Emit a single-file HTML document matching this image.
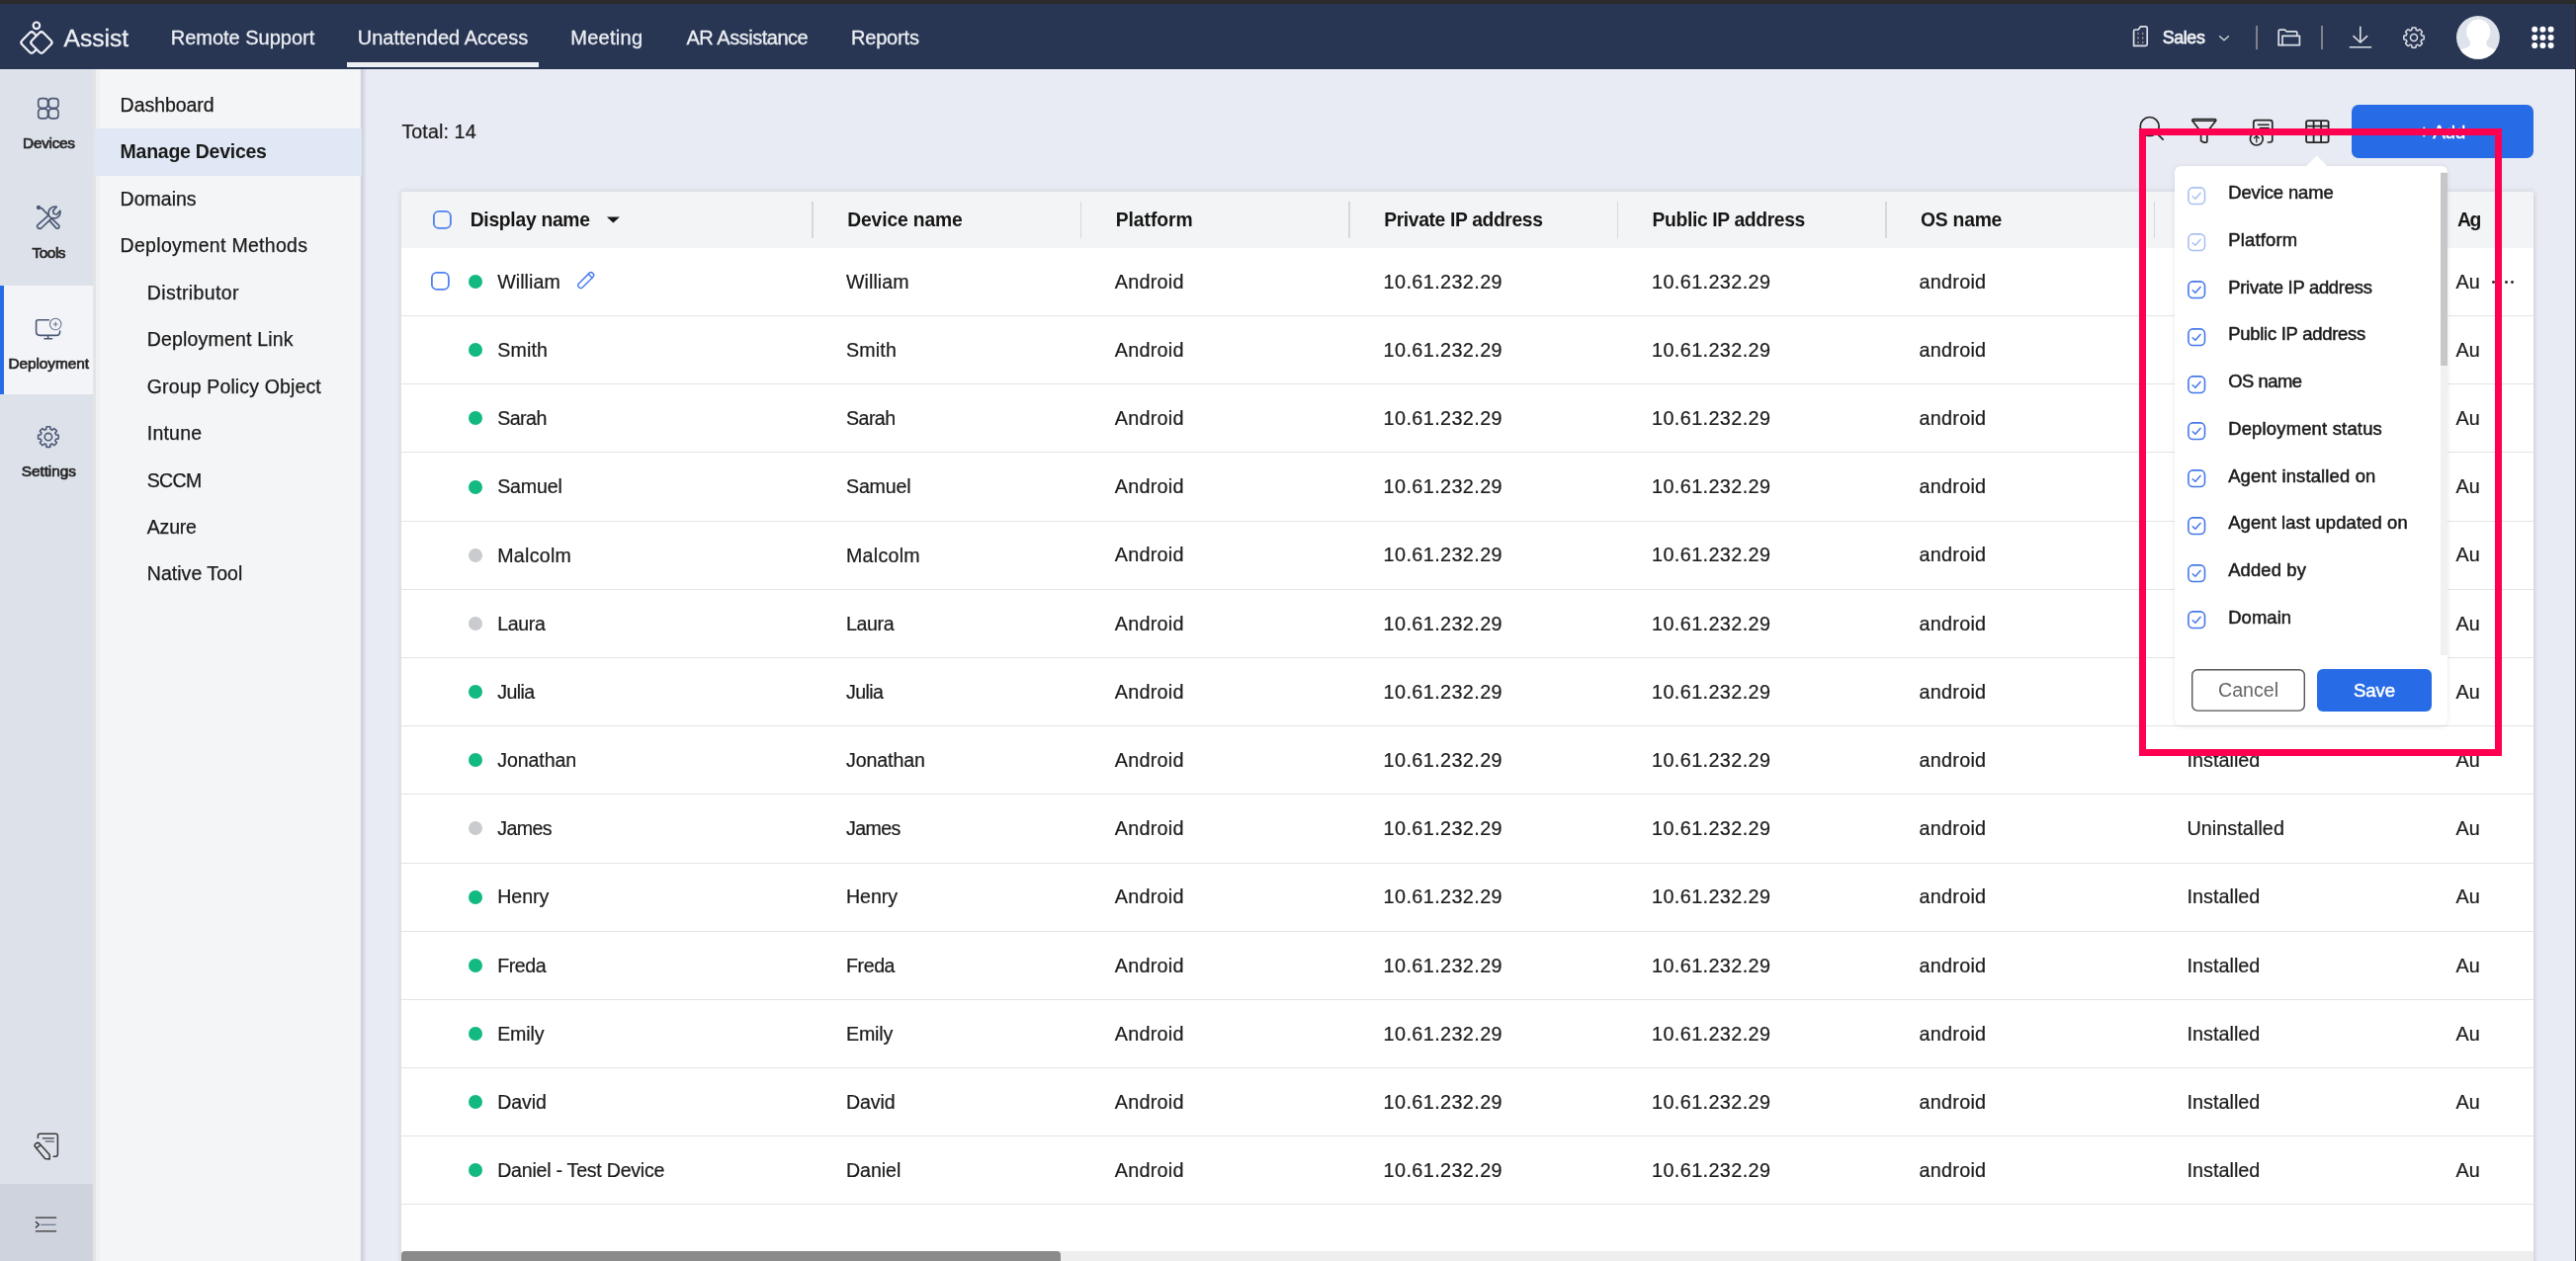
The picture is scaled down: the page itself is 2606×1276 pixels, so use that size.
<!DOCTYPE html>
<html><head><meta charset="utf-8"><title>Assist</title>
<style>
html,body{margin:0;padding:0;}
body{width:2606px;height:1276px;overflow:hidden;background:#2b2b2b;font-family:"Liberation Sans", sans-serif;position:relative;}
.t{position:absolute;white-space:nowrap;line-height:1;}
.b{position:absolute;box-sizing:border-box;}
svg{position:absolute;overflow:visible;}
#app{will-change:transform;position:absolute;left:0;top:0;width:2606px;height:1276px;overflow:hidden;}
</style></head><body><div id="app">
<div class="b" style="left:0.00px;top:4.40px;width:2604.50px;height:1271.60px;background:#e8ebf3;"></div>
<div class="b" style="left:0.00px;top:4.40px;width:2604.50px;height:65.80px;background:#283654;"></div>
<svg style="left:18px;top:16px" width="40" height="44" viewBox="0 0 40 44" fill="none" stroke="#eff0f4" stroke-width="2.2" stroke-linejoin="round">
<circle cx="18.9" cy="9.8" r="3.3"/>
<rect x="-8.3" y="-8.3" width="16.6" height="16.6" rx="2.9" transform="translate(14.0 27.0) rotate(45)"/>
<rect x="-8.3" y="-8.3" width="16.6" height="16.6" rx="2.9" transform="translate(23.9 27.0) rotate(45)" fill="#283654"/>
</svg>
<div class="t" style="left:64.60px;top:27.20px;font-size:24.6px;font-weight:400;color:#eceef2;letter-spacing:-0.032px;-webkit-text-stroke:0.35px #eceef2;">Assist</div>
<div class="t" style="left:172.70px;top:27.60px;font-size:20px;font-weight:400;color:#eceef2;letter-spacing:-0.003px;-webkit-text-stroke:0.3px #eceef2;">Remote Support</div>
<div class="t" style="left:361.80px;top:27.60px;font-size:20px;font-weight:400;color:#eceef2;letter-spacing:0.003px;-webkit-text-stroke:0.3px #eceef2;">Unattended Access</div>
<div class="t" style="left:577.30px;top:27.60px;font-size:20px;font-weight:400;color:#eceef2;letter-spacing:0.263px;-webkit-text-stroke:0.3px #eceef2;">Meeting</div>
<div class="t" style="left:694.50px;top:27.60px;font-size:20px;font-weight:400;color:#eceef2;letter-spacing:-0.481px;-webkit-text-stroke:0.3px #eceef2;">AR Assistance</div>
<div class="t" style="left:861.00px;top:27.60px;font-size:20px;font-weight:400;color:#eceef2;letter-spacing:-0.190px;-webkit-text-stroke:0.3px #eceef2;">Reports</div>
<div class="b" style="left:350.50px;top:63.00px;width:194.10px;height:4.50px;background:#eceef3;"></div>
<svg style="left:2155px;top:23px" width="22" height="26" viewBox="0 0 22 26" fill="none" stroke="#dcdfe6" stroke-width="1.7" stroke-linejoin="round" stroke-linecap="round">
<path d="M3.6 23.4 L3.6 8.4 Q3.6 7 5 7 L8.2 7 L10.6 3.8 L15.6 3.8 Q17.2 3.8 17.2 5.4 L17.2 21.8 Q17.2 23.4 15.6 23.4 Z"/>
<path d="M8 10.4v0.9 M12.7 10.4v0.9 M8 15v0.9 M12.7 15v0.9 M8 19.4v0.9 M12.7 19.4v0.9" stroke="#9d9786" stroke-width="1.5"/>
</svg>
<div class="t" style="left:2187.80px;top:29.90px;font-size:17.8px;font-weight:400;color:#eceef2;letter-spacing:-0.377px;-webkit-text-stroke:0.75px #eceef2;">Sales</div>
<svg style="left:2243px;top:34px" width="14" height="10" viewBox="0 0 14 10" fill="none" stroke="#c9cdd6" stroke-width="1.5" stroke-linecap="round" stroke-linejoin="round"><path d="M2.6 2.8 L7 6.8 L11.4 2.8"/></svg>
<div class="b" style="left:2282.40px;top:25.50px;width:1.30px;height:24.50px;background:#7d818b;"></div>
<svg style="left:2303px;top:28px" width="26" height="20" viewBox="0 0 26 20" fill="none" stroke="#dcdfe6" stroke-width="1.7" stroke-linejoin="round" stroke-linecap="round">
<path d="M2.2 17.6 L2.2 3.4 Q2.2 2.2 3.4 2.2 L8.6 2.2 L10 3.8 L19.6 3.8 Q20.8 3.8 20.8 5 L20.8 7.6"/>
<path d="M6 8.4 L6 17.6 L23.4 17.6 L23.4 8.4 Z"/>
<path d="M2.2 17.6 L6 17.6"/>
</svg>
<div class="b" style="left:2348.40px;top:25.50px;width:1.30px;height:24.50px;background:#7d818b;"></div>
<svg style="left:2375px;top:26px" width="26" height="24" viewBox="0 0 26 24" fill="none" stroke="#dcdfe6" stroke-width="1.6" stroke-linejoin="round" stroke-linecap="round">
<path d="M12.8 1.2 L12.8 16.4 M6 10.6 L12.8 17 L19.6 10.6 M2.4 21.8 L23.6 21.8"/>
</svg>
<svg style="left:2428px;top:24px" width="28" height="28" viewBox="0 0 28 28" fill="none" stroke="#dcdfe6" stroke-width="1.5" stroke-linejoin="round">
<path d="M12.47 3.91 L15.53 3.91 Q16.21 3.83 16.14 6.29 L18.01 7.06 Q19.70 5.27 20.12 5.81 L22.29 7.98 Q22.83 8.40 21.04 10.09 L21.81 11.96 Q24.27 11.89 24.19 12.57 L24.19 15.63 Q24.27 16.31 21.81 16.24 L21.04 18.11 Q22.83 19.80 22.29 20.22 L20.12 22.39 Q19.70 22.93 18.01 21.14 L16.14 21.91 Q16.21 24.37 15.53 24.29 L12.47 24.29 Q11.79 24.37 11.86 21.91 L9.99 21.14 Q8.30 22.93 7.88 22.39 L5.71 20.22 Q5.17 19.80 6.96 18.11 L6.19 16.24 Q3.73 16.31 3.81 15.63 L3.81 12.57 Q3.73 11.89 6.19 11.96 L6.96 10.09 Q5.17 8.40 5.71 7.98 L7.88 5.81 Q8.30 5.27 9.99 7.06 L11.86 6.29 Q11.79 3.83 12.47 3.91 Z"/><circle cx="14" cy="14.1" r="3.5"/></svg>
<svg style="left:2485.3px;top:16.1px" width="44" height="44" viewBox="0 0 44 44">
<defs><clipPath id="avc"><circle cx="21.9" cy="21.9" r="21.9"/></clipPath></defs>
<circle cx="21.9" cy="21.9" r="21.9" fill="#dde2eb"/>
<g clip-path="url(#avc)" fill="#ffffff">
<ellipse cx="22.2" cy="16.2" rx="12.1" ry="12.6"/>
<path d="M13.6 24 L30.8 24 L30.4 29.6 Q31.2 31.6 35 32.8 Q40 34.2 44 36.4 L44 46 L0 46 L0 36.4 Q4 34.2 9 32.8 Q13 31.6 14 29.6 Z"/>
</g></svg>
<svg style="left:0;top:0" width="2606" height="80" fill="#ffffff"><circle cx="2564.2" cy="29.7" r="3"/><circle cx="2572.4" cy="29.7" r="3"/><circle cx="2580.6" cy="29.7" r="3"/><circle cx="2564.2" cy="37.9" r="3"/><circle cx="2572.4" cy="37.9" r="3"/><circle cx="2580.6" cy="37.9" r="3"/><circle cx="2564.2" cy="46.0" r="3"/><circle cx="2572.4" cy="46.0" r="3"/><circle cx="2580.6" cy="46.0" r="3"/></svg>
<div class="b" style="left:0.00px;top:70.20px;width:94.60px;height:1205.80px;background:#dde1ea;"></div>
<div class="b" style="left:0.00px;top:1197.80px;width:94.80px;height:78.20px;background:#cfd3dd;"></div>
<div class="b" style="left:0.00px;top:288.60px;width:94.80px;height:110.10px;background:#f3f4f7;"></div>
<div class="b" style="left:0.00px;top:288.60px;width:4.00px;height:110.10px;background:#276ce6;"></div>
<svg style="left:36px;top:97px" width="26" height="26" viewBox="0 0 26 26" fill="none" stroke="#4b5875" stroke-width="1.6">
<rect x="2.7" y="2.6" width="9.7" height="9.7" rx="3.2"/><rect x="13.3" y="2.6" width="9.7" height="9.7" rx="3.2"/>
<rect x="2.7" y="13.2" width="9.7" height="9.7" rx="3.2"/><rect x="13.3" y="13.2" width="9.7" height="9.7" rx="3.2"/></svg>
<div class="t" style="left:23.10px;top:136.80px;font-size:15.4px;font-weight:400;color:#262626;letter-spacing:-0.307px;-webkit-text-stroke:0.7px #262626;">Devices</div>
<svg style="left:35px;top:206px" width="28" height="28" viewBox="0 0 28 28" fill="none" stroke="#4b5875" stroke-width="1.7" stroke-linecap="round" stroke-linejoin="round">
<path d="M3.2 24.4 Q1.8 22.8 3.4 21.4 L14.4 11.6 Q13.2 7.2 16.4 4.6 Q19 2.6 22.2 3.4 L18.6 7.4 L19.4 10.2 L22.4 11 L25.8 7.2 Q26.6 10.6 24.2 13.2 Q21.4 15.8 17.6 14.6 L6.6 25 Q4.8 26.2 3.2 24.4 Z"/>
<path d="M4.4 4.2 L7.4 4.8 L17 15 M15.2 17.4 L21.6 24.6 Q23 25.8 24.4 24.6 Q25.6 23.2 24.4 21.8 L17.6 15.4 M4.4 4.2 L3.4 3.4"/>
<circle cx="4" cy="4" r="1.3"/>
</svg>
<div class="t" style="left:32.50px;top:248.10px;font-size:15.4px;font-weight:400;color:#262626;letter-spacing:-0.467px;-webkit-text-stroke:0.7px #262626;">Tools</div>
<svg style="left:33px;top:318px" width="32" height="28" viewBox="0 0 32 28" fill="none" stroke="#4b5875" stroke-width="1.6" stroke-linecap="round" stroke-linejoin="round">
<path d="M16.4 5.8 L5.6 5.8 Q3.6 5.8 3.6 7.8 L3.6 17.6 Q3.6 21.4 7.4 21.4 L24 21.4 Q27.6 21.4 27.6 17.8 L27.6 17"/>
<path d="M15.6 21.6 L15.6 24.4 M12 24.8 L19.6 24.8"/>
<circle cx="23.2" cy="10" r="5.7" stroke-width="1.1" stroke="#69748f"/>
<path d="M23.2 8 L23.2 12 M21.2 10 L25.2 10" stroke-width="1.1" stroke="#69748f"/>
</svg>
<div class="t" style="left:8.40px;top:359.50px;font-size:15.4px;font-weight:400;color:#262626;letter-spacing:-0.053px;-webkit-text-stroke:0.7px #262626;">Deployment</div>
<svg style="left:35px;top:428px" width="28" height="28" viewBox="0 0 28 28" fill="none" stroke="#4b5875" stroke-width="1.6" stroke-linejoin="round">
<path d="M12.35 3.82 L15.45 3.82 Q16.13 3.73 16.01 6.38 L17.86 7.15 Q19.65 5.19 20.08 5.73 L22.27 7.92 Q22.81 8.35 20.85 10.14 L21.62 11.99 Q24.27 11.87 24.18 12.55 L24.18 15.65 Q24.27 16.33 21.62 16.21 L20.85 18.06 Q22.81 19.85 22.27 20.28 L20.08 22.47 Q19.65 23.01 17.86 21.05 L16.01 21.82 Q16.13 24.47 15.45 24.38 L12.35 24.38 Q11.67 24.47 11.79 21.82 L9.94 21.05 Q8.15 23.01 7.72 22.47 L5.53 20.28 Q4.99 19.85 6.95 18.06 L6.18 16.21 Q3.53 16.33 3.62 15.65 L3.62 12.55 Q3.53 11.87 6.18 11.99 L6.95 10.14 Q4.99 8.35 5.53 7.92 L7.72 5.73 Q8.15 5.19 9.94 7.15 L11.79 6.38 Q11.67 3.73 12.35 3.82 Z"/><circle cx="13.9" cy="14.1" r="3.7"/></svg>
<div class="t" style="left:21.70px;top:469.30px;font-size:15.4px;font-weight:400;color:#262626;letter-spacing:-0.053px;-webkit-text-stroke:0.7px #262626;">Settings</div>
<svg style="left:32px;top:1143px" width="30" height="34" viewBox="0 0 30 34" fill="none" stroke="#3a3a3a" stroke-width="1.5" stroke-linecap="round" stroke-linejoin="round">
<path d="M6.4 8.6 L6.4 6.4 Q6.4 4.2 8.6 4.2 L24.2 4.2 Q26.4 4.2 26.4 6.4 L26.4 25 Q26.4 27.2 24.2 27.2 L22.2 27.2"/>
<path d="M11.2 8.8 L22.4 8.8 M14.2 12 L22.4 12" stroke-width="1.2"/>
<path d="M3.6 17.6 Q2.2 15.6 4.4 14 Q6.6 12.6 8.2 14.4 L18.2 25.6 L18.2 30 L13.6 29.4 Z M4.4 18.4 Q7.4 18.2 8.8 15.2" fill="#dde1ea"/>
</svg>
<svg style="left:34px;top:1229px" width="26" height="22" viewBox="0 0 26 22" fill="none" stroke="#333" stroke-width="1.3" stroke-linecap="round" stroke-linejoin="round">
<path d="M2.4 3.2 L22.6 3.2 M2.4 16.9 L22.6 16.9"/><path d="M7.6 10.3 L22 10.3" stroke="#55617c" stroke-width="1.1"/><path d="M2.4 7.6 L5.4 10.3 L2.4 13" stroke-width="1.4"/>
</svg>
<div class="b" style="left:94.80px;top:70.20px;width:271.40px;height:1205.80px;background:#f4f5f7;"></div>
<div class="b" style="left:94.20px;top:70.20px;width:2.70px;height:1205.80px;background:#e3e4e5;"></div>
<div class="b" style="left:96.90px;top:70.20px;width:4.00px;height:1205.80px;background:#f0f0f1;"></div>
<div class="b" style="left:364.20px;top:70.20px;width:2.00px;height:1205.80px;background:linear-gradient(90deg,rgba(150,155,170,0),rgba(150,155,170,0.45));"></div>
<div class="b" style="left:366.20px;top:70.20px;width:4.50px;height:1205.80px;background:linear-gradient(90deg,rgba(150,155,175,0.34),rgba(150,155,175,0));"></div>
<div class="b" style="left:96.00px;top:130.20px;width:270.00px;height:47.40px;background:#dfe8f4;"></div>
<div class="t" style="left:121.60px;top:96.95px;font-size:19.5px;font-weight:400;color:#1a1a1a;letter-spacing:-0.045px;-webkit-text-stroke:0.25px #1a1a1a;">Dashboard</div>
<div class="t" style="left:121.60px;top:144.40px;font-size:19.5px;font-weight:700;color:#1a1a1a;letter-spacing:-0.261px;">Manage Devices</div>
<div class="t" style="left:121.60px;top:191.85px;font-size:19.5px;font-weight:400;color:#1a1a1a;letter-spacing:0.007px;-webkit-text-stroke:0.25px #1a1a1a;">Domains</div>
<div class="t" style="left:121.60px;top:239.30px;font-size:19.5px;font-weight:400;color:#1a1a1a;letter-spacing:0.302px;-webkit-text-stroke:0.25px #1a1a1a;">Deployment Methods</div>
<div class="t" style="left:148.80px;top:286.75px;font-size:19.5px;font-weight:400;color:#1a1a1a;letter-spacing:0.395px;-webkit-text-stroke:0.25px #1a1a1a;">Distributor</div>
<div class="t" style="left:148.80px;top:334.20px;font-size:19.5px;font-weight:400;color:#1a1a1a;letter-spacing:0.170px;-webkit-text-stroke:0.25px #1a1a1a;">Deployment Link</div>
<div class="t" style="left:148.80px;top:381.65px;font-size:19.5px;font-weight:400;color:#1a1a1a;letter-spacing:0.142px;-webkit-text-stroke:0.25px #1a1a1a;">Group Policy Object</div>
<div class="t" style="left:148.80px;top:429.10px;font-size:19.5px;font-weight:400;color:#1a1a1a;letter-spacing:0.214px;-webkit-text-stroke:0.25px #1a1a1a;">Intune</div>
<div class="t" style="left:148.80px;top:476.55px;font-size:19.5px;font-weight:400;color:#1a1a1a;letter-spacing:-0.680px;-webkit-text-stroke:0.25px #1a1a1a;">SCCM</div>
<div class="t" style="left:148.80px;top:524.00px;font-size:19.5px;font-weight:400;color:#1a1a1a;letter-spacing:-0.211px;-webkit-text-stroke:0.25px #1a1a1a;">Azure</div>
<div class="t" style="left:148.80px;top:571.45px;font-size:19.5px;font-weight:400;color:#1a1a1a;letter-spacing:0.034px;-webkit-text-stroke:0.25px #1a1a1a;">Native Tool</div>
<div class="t" style="left:406.40px;top:123.55px;font-size:19.7px;font-weight:400;color:#1c1c1c;letter-spacing:0.096px;-webkit-text-stroke:0.22px #1c1c1c;">Total: 14</div>
<svg style="left:2160px;top:112px" width="34" height="34" viewBox="0 0 34 34" fill="none" stroke="#262626" stroke-width="1.7" stroke-linecap="round">
<circle cx="14.7" cy="16" r="9.5"/><path d="M21.8 22.8 L28.2 29.2"/></svg>
<svg style="left:2213px;top:116px" width="34" height="32" viewBox="0 0 34 32" fill="none" stroke="#262626" stroke-width="1.7" stroke-linejoin="round" stroke-linecap="round">
<path d="M6.2 4.6 L27.4 4.6 Q29.4 4.6 28.4 6.6 L19.8 17.6 L19.8 27 Q19.8 28.2 18.6 28.2 L16.6 28.2 L13.6 26.4 L13.6 17.6 L5.2 6.6 Q4.2 4.6 6.2 4.6 Z"/>
<path d="M5 6.4 L28.6 6.4" stroke-width="1.3"/></svg>
<svg style="left:2272px;top:117.2px" width="32" height="32" viewBox="0 0 32 32" fill="none" stroke="#262626" stroke-width="1.7" stroke-linejoin="round" stroke-linecap="round">
<path d="M7.8 14 L7.8 7 Q7.8 4.6 10.2 4.6 L24.4 4.6 Q26.8 4.6 26.8 7 L26.8 24.6 Q26.8 27 24.4 27 L22.4 27"/>
<path d="M12.4 9.2 L23.2 9.2 M14.4 12.4 L23.2 12.4" stroke-width="1.4"/>
<circle cx="10.8" cy="23.6" r="6.4"/><path d="M10.8 26.8 L10.8 20.8 M8.4 22.8 L10.8 20.4 L13.2 22.8" stroke-width="1.3"/></svg>
<svg style="left:2330px;top:119px" width="30" height="28" viewBox="0 0 30 28" fill="none" stroke="#262626" stroke-width="1.8" stroke-linejoin="round">
<rect x="3.1" y="3.1" width="22.5" height="22" rx="1.8"/><path d="M3.1 8.6 L25.6 8.6 M3.1 17.4 L25.6 17.4 M10.6 3.1 L10.6 25.1 M18.1 3.1 L18.1 25.1"/></svg>
<div class="b" style="left:2379.40px;top:105.80px;width:183.60px;height:54.30px;background:#276ce6;border-radius:7px;"></div>
<div class="t" style="left:2446.80px;top:124.30px;font-size:19px;font-weight:400;color:#ffffff;letter-spacing:-0.428px;-webkit-text-stroke:0.4px #ffffff;">+ Add</div>
<div class="b" style="left:406.20px;top:194.00px;width:2156.80px;height:1106.00px;border-radius:4px;box-shadow:0 0 3px 2.5px rgba(150,150,150,0.11);"></div>
<div class="b" style="left:406.20px;top:194.00px;width:2156.80px;height:1082.00px;background:#ffffff;border-radius:4px 4px 0 0;"></div>
<div class="b" style="left:406.20px;top:194.00px;width:2156.80px;height:56.60px;background:#f3f4f6;border-radius:4px 4px 0 0;"></div>
<div class="b" style="left:821.30px;top:203.90px;width:1.40px;height:37.00px;background:#d6d8dc;"></div>
<div class="b" style="left:1092.80px;top:203.90px;width:1.40px;height:37.00px;background:#d6d8dc;"></div>
<div class="b" style="left:1364.30px;top:203.90px;width:1.40px;height:37.00px;background:#d6d8dc;"></div>
<div class="b" style="left:1635.70px;top:203.90px;width:1.40px;height:37.00px;background:#d6d8dc;"></div>
<div class="b" style="left:1907.20px;top:203.90px;width:1.40px;height:37.00px;background:#d6d8dc;"></div>
<div class="b" style="left:2178.60px;top:203.90px;width:1.40px;height:37.00px;background:#d6d8dc;"></div>
<div class="b" style="left:2450.00px;top:203.90px;width:1.40px;height:37.00px;background:#d6d8dc;"></div>
<svg style="left:436.6px;top:212px" width="21" height="21" viewBox="0 0 21 21"><rect x="1.9" y="1.9" width="17" height="17" rx="5" fill="none" stroke="#4f80ee" stroke-width="1.8"/></svg>
<div class="t" style="left:475.70px;top:213.25px;font-size:19.3px;font-weight:700;color:#161616;letter-spacing:-0.276px;">Display name</div>
<svg style="left:613px;top:217px" width="16" height="12" viewBox="0 0 16 12"><path d="M0.9 2.6 L13.9 2.6 L7.4 8.6 Z" fill="#161616"/></svg>
<div class="t" style="left:857.20px;top:213.25px;font-size:19.3px;font-weight:700;color:#161616;letter-spacing:-0.128px;">Device name</div>
<div class="t" style="left:1128.70px;top:213.25px;font-size:19.3px;font-weight:700;color:#161616;letter-spacing:-0.040px;">Platform</div>
<div class="t" style="left:1400.20px;top:213.25px;font-size:19.3px;font-weight:700;color:#161616;letter-spacing:-0.359px;">Private IP address</div>
<div class="t" style="left:1671.60px;top:213.25px;font-size:19.3px;font-weight:700;color:#161616;letter-spacing:-0.358px;">Public IP address</div>
<div class="t" style="left:1943.10px;top:213.25px;font-size:19.3px;font-weight:700;color:#161616;letter-spacing:-0.228px;">OS name</div>
<div class="t" style="left:2214.50px;top:213.25px;font-size:19.3px;font-weight:700;color:#161616;letter-spacing:-0.441px;">Deployment status</div>
<div class="t" style="left:2485.90px;top:213.25px;font-size:19.3px;font-weight:700;color:#161616;letter-spacing:-1.202px;">Ag</div>
<div class="b" style="left:406.20px;top:319.00px;width:2156.80px;height:1.00px;background:#e3e4e6;"></div>
<div class="b" style="left:474.00px;top:278.00px;width:14.00px;height:14.00px;background:#12b981;border-radius:50%;"></div>
<div class="t" style="left:503.20px;top:275.80px;font-size:19.6px;font-weight:400;color:#1c1c1c;letter-spacing:0.068px;-webkit-text-stroke:0.22px #1c1c1c;">William</div>
<div class="t" style="left:856.00px;top:275.80px;font-size:19.6px;font-weight:400;color:#1c1c1c;letter-spacing:0.068px;-webkit-text-stroke:0.22px #1c1c1c;">William</div>
<div class="t" style="left:1127.70px;top:275.70px;font-size:19.8px;font-weight:400;color:#1c1c1c;letter-spacing:0.259px;-webkit-text-stroke:0.22px #1c1c1c;">Android</div>
<div class="t" style="left:1399.60px;top:275.70px;font-size:19.8px;font-weight:400;color:#1c1c1c;letter-spacing:0.407px;-webkit-text-stroke:0.22px #1c1c1c;">10.61.232.29</div>
<div class="t" style="left:1671.00px;top:275.70px;font-size:19.8px;font-weight:400;color:#1c1c1c;letter-spacing:0.407px;-webkit-text-stroke:0.22px #1c1c1c;">10.61.232.29</div>
<div class="t" style="left:1941.40px;top:275.70px;font-size:19.8px;font-weight:400;color:#1c1c1c;letter-spacing:0.286px;-webkit-text-stroke:0.22px #1c1c1c;">android</div>
<div class="t" style="left:2212.40px;top:275.70px;font-size:19.8px;font-weight:400;color:#1c1c1c;letter-spacing:0.035px;-webkit-text-stroke:0.22px #1c1c1c;">Installed</div>
<div class="t" style="left:2484.60px;top:275.70px;font-size:19.8px;font-weight:400;color:#1c1c1c;letter-spacing:-0.102px;-webkit-text-stroke:0.22px #1c1c1c;">Au</div>
<div class="b" style="left:406.20px;top:388.00px;width:2156.80px;height:1.00px;background:#e3e4e6;"></div>
<div class="b" style="left:474.00px;top:347.18px;width:14.00px;height:14.00px;background:#12b981;border-radius:50%;"></div>
<div class="t" style="left:503.20px;top:344.98px;font-size:19.6px;font-weight:400;color:#1c1c1c;letter-spacing:0.181px;-webkit-text-stroke:0.22px #1c1c1c;">Smith</div>
<div class="t" style="left:856.00px;top:344.98px;font-size:19.6px;font-weight:400;color:#1c1c1c;letter-spacing:0.181px;-webkit-text-stroke:0.22px #1c1c1c;">Smith</div>
<div class="t" style="left:1127.70px;top:344.88px;font-size:19.8px;font-weight:400;color:#1c1c1c;letter-spacing:0.259px;-webkit-text-stroke:0.22px #1c1c1c;">Android</div>
<div class="t" style="left:1399.60px;top:344.88px;font-size:19.8px;font-weight:400;color:#1c1c1c;letter-spacing:0.407px;-webkit-text-stroke:0.22px #1c1c1c;">10.61.232.29</div>
<div class="t" style="left:1671.00px;top:344.88px;font-size:19.8px;font-weight:400;color:#1c1c1c;letter-spacing:0.407px;-webkit-text-stroke:0.22px #1c1c1c;">10.61.232.29</div>
<div class="t" style="left:1941.40px;top:344.88px;font-size:19.8px;font-weight:400;color:#1c1c1c;letter-spacing:0.286px;-webkit-text-stroke:0.22px #1c1c1c;">android</div>
<div class="t" style="left:2212.40px;top:344.88px;font-size:19.8px;font-weight:400;color:#1c1c1c;letter-spacing:0.035px;-webkit-text-stroke:0.22px #1c1c1c;">Installed</div>
<div class="t" style="left:2484.60px;top:344.88px;font-size:19.8px;font-weight:400;color:#1c1c1c;letter-spacing:-0.102px;-webkit-text-stroke:0.22px #1c1c1c;">Au</div>
<div class="b" style="left:406.20px;top:457.00px;width:2156.80px;height:1.00px;background:#e3e4e6;"></div>
<div class="b" style="left:474.00px;top:416.36px;width:14.00px;height:14.00px;background:#12b981;border-radius:50%;"></div>
<div class="t" style="left:503.20px;top:414.16px;font-size:19.6px;font-weight:400;color:#1c1c1c;letter-spacing:-0.539px;-webkit-text-stroke:0.22px #1c1c1c;">Sarah</div>
<div class="t" style="left:856.00px;top:414.16px;font-size:19.6px;font-weight:400;color:#1c1c1c;letter-spacing:-0.539px;-webkit-text-stroke:0.22px #1c1c1c;">Sarah</div>
<div class="t" style="left:1127.70px;top:414.06px;font-size:19.8px;font-weight:400;color:#1c1c1c;letter-spacing:0.259px;-webkit-text-stroke:0.22px #1c1c1c;">Android</div>
<div class="t" style="left:1399.60px;top:414.06px;font-size:19.8px;font-weight:400;color:#1c1c1c;letter-spacing:0.407px;-webkit-text-stroke:0.22px #1c1c1c;">10.61.232.29</div>
<div class="t" style="left:1671.00px;top:414.06px;font-size:19.8px;font-weight:400;color:#1c1c1c;letter-spacing:0.407px;-webkit-text-stroke:0.22px #1c1c1c;">10.61.232.29</div>
<div class="t" style="left:1941.40px;top:414.06px;font-size:19.8px;font-weight:400;color:#1c1c1c;letter-spacing:0.286px;-webkit-text-stroke:0.22px #1c1c1c;">android</div>
<div class="t" style="left:2212.40px;top:414.06px;font-size:19.8px;font-weight:400;color:#1c1c1c;letter-spacing:0.035px;-webkit-text-stroke:0.22px #1c1c1c;">Installed</div>
<div class="t" style="left:2484.60px;top:414.06px;font-size:19.8px;font-weight:400;color:#1c1c1c;letter-spacing:-0.102px;-webkit-text-stroke:0.22px #1c1c1c;">Au</div>
<div class="b" style="left:406.20px;top:527.00px;width:2156.80px;height:1.00px;background:#e3e4e6;"></div>
<div class="b" style="left:474.00px;top:485.54px;width:14.00px;height:14.00px;background:#12b981;border-radius:50%;"></div>
<div class="t" style="left:503.20px;top:483.34px;font-size:19.6px;font-weight:400;color:#1c1c1c;letter-spacing:-0.173px;-webkit-text-stroke:0.22px #1c1c1c;">Samuel</div>
<div class="t" style="left:856.00px;top:483.34px;font-size:19.6px;font-weight:400;color:#1c1c1c;letter-spacing:-0.173px;-webkit-text-stroke:0.22px #1c1c1c;">Samuel</div>
<div class="t" style="left:1127.70px;top:483.24px;font-size:19.8px;font-weight:400;color:#1c1c1c;letter-spacing:0.259px;-webkit-text-stroke:0.22px #1c1c1c;">Android</div>
<div class="t" style="left:1399.60px;top:483.24px;font-size:19.8px;font-weight:400;color:#1c1c1c;letter-spacing:0.407px;-webkit-text-stroke:0.22px #1c1c1c;">10.61.232.29</div>
<div class="t" style="left:1671.00px;top:483.24px;font-size:19.8px;font-weight:400;color:#1c1c1c;letter-spacing:0.407px;-webkit-text-stroke:0.22px #1c1c1c;">10.61.232.29</div>
<div class="t" style="left:1941.40px;top:483.24px;font-size:19.8px;font-weight:400;color:#1c1c1c;letter-spacing:0.286px;-webkit-text-stroke:0.22px #1c1c1c;">android</div>
<div class="t" style="left:2212.40px;top:483.24px;font-size:19.8px;font-weight:400;color:#1c1c1c;letter-spacing:0.035px;-webkit-text-stroke:0.22px #1c1c1c;">Installed</div>
<div class="t" style="left:2484.60px;top:483.24px;font-size:19.8px;font-weight:400;color:#1c1c1c;letter-spacing:-0.102px;-webkit-text-stroke:0.22px #1c1c1c;">Au</div>
<div class="b" style="left:406.20px;top:596.00px;width:2156.80px;height:1.00px;background:#e3e4e6;"></div>
<div class="b" style="left:474.00px;top:554.72px;width:14.00px;height:14.00px;background:#cacbce;border-radius:50%;"></div>
<div class="t" style="left:503.20px;top:552.52px;font-size:19.6px;font-weight:400;color:#1c1c1c;letter-spacing:0.292px;-webkit-text-stroke:0.22px #1c1c1c;">Malcolm</div>
<div class="t" style="left:856.00px;top:552.52px;font-size:19.6px;font-weight:400;color:#1c1c1c;letter-spacing:0.292px;-webkit-text-stroke:0.22px #1c1c1c;">Malcolm</div>
<div class="t" style="left:1127.70px;top:552.42px;font-size:19.8px;font-weight:400;color:#1c1c1c;letter-spacing:0.259px;-webkit-text-stroke:0.22px #1c1c1c;">Android</div>
<div class="t" style="left:1399.60px;top:552.42px;font-size:19.8px;font-weight:400;color:#1c1c1c;letter-spacing:0.407px;-webkit-text-stroke:0.22px #1c1c1c;">10.61.232.29</div>
<div class="t" style="left:1671.00px;top:552.42px;font-size:19.8px;font-weight:400;color:#1c1c1c;letter-spacing:0.407px;-webkit-text-stroke:0.22px #1c1c1c;">10.61.232.29</div>
<div class="t" style="left:1941.40px;top:552.42px;font-size:19.8px;font-weight:400;color:#1c1c1c;letter-spacing:0.286px;-webkit-text-stroke:0.22px #1c1c1c;">android</div>
<div class="t" style="left:2212.40px;top:552.42px;font-size:19.8px;font-weight:400;color:#1c1c1c;letter-spacing:0.035px;-webkit-text-stroke:0.22px #1c1c1c;">Installed</div>
<div class="t" style="left:2484.60px;top:552.42px;font-size:19.8px;font-weight:400;color:#1c1c1c;letter-spacing:-0.102px;-webkit-text-stroke:0.22px #1c1c1c;">Au</div>
<div class="b" style="left:406.20px;top:665.00px;width:2156.80px;height:1.00px;background:#e3e4e6;"></div>
<div class="b" style="left:474.00px;top:623.90px;width:14.00px;height:14.00px;background:#cacbce;border-radius:50%;"></div>
<div class="t" style="left:503.20px;top:621.70px;font-size:19.6px;font-weight:400;color:#1c1c1c;letter-spacing:-0.365px;-webkit-text-stroke:0.22px #1c1c1c;">Laura</div>
<div class="t" style="left:856.00px;top:621.70px;font-size:19.6px;font-weight:400;color:#1c1c1c;letter-spacing:-0.365px;-webkit-text-stroke:0.22px #1c1c1c;">Laura</div>
<div class="t" style="left:1127.70px;top:621.60px;font-size:19.8px;font-weight:400;color:#1c1c1c;letter-spacing:0.259px;-webkit-text-stroke:0.22px #1c1c1c;">Android</div>
<div class="t" style="left:1399.60px;top:621.60px;font-size:19.8px;font-weight:400;color:#1c1c1c;letter-spacing:0.407px;-webkit-text-stroke:0.22px #1c1c1c;">10.61.232.29</div>
<div class="t" style="left:1671.00px;top:621.60px;font-size:19.8px;font-weight:400;color:#1c1c1c;letter-spacing:0.407px;-webkit-text-stroke:0.22px #1c1c1c;">10.61.232.29</div>
<div class="t" style="left:1941.40px;top:621.60px;font-size:19.8px;font-weight:400;color:#1c1c1c;letter-spacing:0.286px;-webkit-text-stroke:0.22px #1c1c1c;">android</div>
<div class="t" style="left:2212.40px;top:621.60px;font-size:19.8px;font-weight:400;color:#1c1c1c;letter-spacing:0.035px;-webkit-text-stroke:0.22px #1c1c1c;">Installed</div>
<div class="t" style="left:2484.60px;top:621.60px;font-size:19.8px;font-weight:400;color:#1c1c1c;letter-spacing:-0.102px;-webkit-text-stroke:0.22px #1c1c1c;">Au</div>
<div class="b" style="left:406.20px;top:734.00px;width:2156.80px;height:1.00px;background:#e3e4e6;"></div>
<div class="b" style="left:474.00px;top:693.08px;width:14.00px;height:14.00px;background:#12b981;border-radius:50%;"></div>
<div class="t" style="left:503.20px;top:690.88px;font-size:19.6px;font-weight:400;color:#1c1c1c;letter-spacing:-0.603px;-webkit-text-stroke:0.22px #1c1c1c;">Julia</div>
<div class="t" style="left:856.00px;top:690.88px;font-size:19.6px;font-weight:400;color:#1c1c1c;letter-spacing:-0.603px;-webkit-text-stroke:0.22px #1c1c1c;">Julia</div>
<div class="t" style="left:1127.70px;top:690.78px;font-size:19.8px;font-weight:400;color:#1c1c1c;letter-spacing:0.259px;-webkit-text-stroke:0.22px #1c1c1c;">Android</div>
<div class="t" style="left:1399.60px;top:690.78px;font-size:19.8px;font-weight:400;color:#1c1c1c;letter-spacing:0.407px;-webkit-text-stroke:0.22px #1c1c1c;">10.61.232.29</div>
<div class="t" style="left:1671.00px;top:690.78px;font-size:19.8px;font-weight:400;color:#1c1c1c;letter-spacing:0.407px;-webkit-text-stroke:0.22px #1c1c1c;">10.61.232.29</div>
<div class="t" style="left:1941.40px;top:690.78px;font-size:19.8px;font-weight:400;color:#1c1c1c;letter-spacing:0.286px;-webkit-text-stroke:0.22px #1c1c1c;">android</div>
<div class="t" style="left:2212.40px;top:690.78px;font-size:19.8px;font-weight:400;color:#1c1c1c;letter-spacing:0.035px;-webkit-text-stroke:0.22px #1c1c1c;">Installed</div>
<div class="t" style="left:2484.60px;top:690.78px;font-size:19.8px;font-weight:400;color:#1c1c1c;letter-spacing:-0.102px;-webkit-text-stroke:0.22px #1c1c1c;">Au</div>
<div class="b" style="left:406.20px;top:803.00px;width:2156.80px;height:1.00px;background:#e3e4e6;"></div>
<div class="b" style="left:474.00px;top:762.26px;width:14.00px;height:14.00px;background:#12b981;border-radius:50%;"></div>
<div class="t" style="left:503.20px;top:760.06px;font-size:19.6px;font-weight:400;color:#1c1c1c;letter-spacing:-0.091px;-webkit-text-stroke:0.22px #1c1c1c;">Jonathan</div>
<div class="t" style="left:856.00px;top:760.06px;font-size:19.6px;font-weight:400;color:#1c1c1c;letter-spacing:-0.091px;-webkit-text-stroke:0.22px #1c1c1c;">Jonathan</div>
<div class="t" style="left:1127.70px;top:759.96px;font-size:19.8px;font-weight:400;color:#1c1c1c;letter-spacing:0.259px;-webkit-text-stroke:0.22px #1c1c1c;">Android</div>
<div class="t" style="left:1399.60px;top:759.96px;font-size:19.8px;font-weight:400;color:#1c1c1c;letter-spacing:0.407px;-webkit-text-stroke:0.22px #1c1c1c;">10.61.232.29</div>
<div class="t" style="left:1671.00px;top:759.96px;font-size:19.8px;font-weight:400;color:#1c1c1c;letter-spacing:0.407px;-webkit-text-stroke:0.22px #1c1c1c;">10.61.232.29</div>
<div class="t" style="left:1941.40px;top:759.96px;font-size:19.8px;font-weight:400;color:#1c1c1c;letter-spacing:0.286px;-webkit-text-stroke:0.22px #1c1c1c;">android</div>
<div class="t" style="left:2212.40px;top:759.96px;font-size:19.8px;font-weight:400;color:#1c1c1c;letter-spacing:0.035px;-webkit-text-stroke:0.22px #1c1c1c;">Installed</div>
<div class="t" style="left:2484.60px;top:759.96px;font-size:19.8px;font-weight:400;color:#1c1c1c;letter-spacing:-0.102px;-webkit-text-stroke:0.22px #1c1c1c;">Au</div>
<div class="b" style="left:406.20px;top:873.00px;width:2156.80px;height:1.00px;background:#e3e4e6;"></div>
<div class="b" style="left:474.00px;top:831.44px;width:14.00px;height:14.00px;background:#cacbce;border-radius:50%;"></div>
<div class="t" style="left:503.20px;top:829.24px;font-size:19.6px;font-weight:400;color:#1c1c1c;letter-spacing:-0.584px;-webkit-text-stroke:0.22px #1c1c1c;">James</div>
<div class="t" style="left:856.00px;top:829.24px;font-size:19.6px;font-weight:400;color:#1c1c1c;letter-spacing:-0.584px;-webkit-text-stroke:0.22px #1c1c1c;">James</div>
<div class="t" style="left:1127.70px;top:829.14px;font-size:19.8px;font-weight:400;color:#1c1c1c;letter-spacing:0.259px;-webkit-text-stroke:0.22px #1c1c1c;">Android</div>
<div class="t" style="left:1399.60px;top:829.14px;font-size:19.8px;font-weight:400;color:#1c1c1c;letter-spacing:0.407px;-webkit-text-stroke:0.22px #1c1c1c;">10.61.232.29</div>
<div class="t" style="left:1671.00px;top:829.14px;font-size:19.8px;font-weight:400;color:#1c1c1c;letter-spacing:0.407px;-webkit-text-stroke:0.22px #1c1c1c;">10.61.232.29</div>
<div class="t" style="left:1941.40px;top:829.14px;font-size:19.8px;font-weight:400;color:#1c1c1c;letter-spacing:0.286px;-webkit-text-stroke:0.22px #1c1c1c;">android</div>
<div class="t" style="left:2212.40px;top:829.14px;font-size:19.8px;font-weight:400;color:#1c1c1c;letter-spacing:0.066px;-webkit-text-stroke:0.22px #1c1c1c;">Uninstalled</div>
<div class="t" style="left:2484.60px;top:829.14px;font-size:19.8px;font-weight:400;color:#1c1c1c;letter-spacing:-0.102px;-webkit-text-stroke:0.22px #1c1c1c;">Au</div>
<div class="b" style="left:406.20px;top:942.00px;width:2156.80px;height:1.00px;background:#e3e4e6;"></div>
<div class="b" style="left:474.00px;top:900.62px;width:14.00px;height:14.00px;background:#12b981;border-radius:50%;"></div>
<div class="t" style="left:503.20px;top:898.42px;font-size:19.6px;font-weight:400;color:#1c1c1c;letter-spacing:-0.036px;-webkit-text-stroke:0.22px #1c1c1c;">Henry</div>
<div class="t" style="left:856.00px;top:898.42px;font-size:19.6px;font-weight:400;color:#1c1c1c;letter-spacing:-0.036px;-webkit-text-stroke:0.22px #1c1c1c;">Henry</div>
<div class="t" style="left:1127.70px;top:898.32px;font-size:19.8px;font-weight:400;color:#1c1c1c;letter-spacing:0.259px;-webkit-text-stroke:0.22px #1c1c1c;">Android</div>
<div class="t" style="left:1399.60px;top:898.32px;font-size:19.8px;font-weight:400;color:#1c1c1c;letter-spacing:0.407px;-webkit-text-stroke:0.22px #1c1c1c;">10.61.232.29</div>
<div class="t" style="left:1671.00px;top:898.32px;font-size:19.8px;font-weight:400;color:#1c1c1c;letter-spacing:0.407px;-webkit-text-stroke:0.22px #1c1c1c;">10.61.232.29</div>
<div class="t" style="left:1941.40px;top:898.32px;font-size:19.8px;font-weight:400;color:#1c1c1c;letter-spacing:0.286px;-webkit-text-stroke:0.22px #1c1c1c;">android</div>
<div class="t" style="left:2212.40px;top:898.32px;font-size:19.8px;font-weight:400;color:#1c1c1c;letter-spacing:0.035px;-webkit-text-stroke:0.22px #1c1c1c;">Installed</div>
<div class="t" style="left:2484.60px;top:898.32px;font-size:19.8px;font-weight:400;color:#1c1c1c;letter-spacing:-0.102px;-webkit-text-stroke:0.22px #1c1c1c;">Au</div>
<div class="b" style="left:406.20px;top:1011.00px;width:2156.80px;height:1.00px;background:#e3e4e6;"></div>
<div class="b" style="left:474.00px;top:969.80px;width:14.00px;height:14.00px;background:#12b981;border-radius:50%;"></div>
<div class="t" style="left:503.20px;top:967.60px;font-size:19.6px;font-weight:400;color:#1c1c1c;letter-spacing:-0.417px;-webkit-text-stroke:0.22px #1c1c1c;">Freda</div>
<div class="t" style="left:856.00px;top:967.60px;font-size:19.6px;font-weight:400;color:#1c1c1c;letter-spacing:-0.417px;-webkit-text-stroke:0.22px #1c1c1c;">Freda</div>
<div class="t" style="left:1127.70px;top:967.50px;font-size:19.8px;font-weight:400;color:#1c1c1c;letter-spacing:0.259px;-webkit-text-stroke:0.22px #1c1c1c;">Android</div>
<div class="t" style="left:1399.60px;top:967.50px;font-size:19.8px;font-weight:400;color:#1c1c1c;letter-spacing:0.407px;-webkit-text-stroke:0.22px #1c1c1c;">10.61.232.29</div>
<div class="t" style="left:1671.00px;top:967.50px;font-size:19.8px;font-weight:400;color:#1c1c1c;letter-spacing:0.407px;-webkit-text-stroke:0.22px #1c1c1c;">10.61.232.29</div>
<div class="t" style="left:1941.40px;top:967.50px;font-size:19.8px;font-weight:400;color:#1c1c1c;letter-spacing:0.286px;-webkit-text-stroke:0.22px #1c1c1c;">android</div>
<div class="t" style="left:2212.40px;top:967.50px;font-size:19.8px;font-weight:400;color:#1c1c1c;letter-spacing:0.035px;-webkit-text-stroke:0.22px #1c1c1c;">Installed</div>
<div class="t" style="left:2484.60px;top:967.50px;font-size:19.8px;font-weight:400;color:#1c1c1c;letter-spacing:-0.102px;-webkit-text-stroke:0.22px #1c1c1c;">Au</div>
<div class="b" style="left:406.20px;top:1080.00px;width:2156.80px;height:1.00px;background:#e3e4e6;"></div>
<div class="b" style="left:474.00px;top:1038.98px;width:14.00px;height:14.00px;background:#12b981;border-radius:50%;"></div>
<div class="t" style="left:503.20px;top:1036.78px;font-size:19.6px;font-weight:400;color:#1c1c1c;letter-spacing:-0.141px;-webkit-text-stroke:0.22px #1c1c1c;">Emily</div>
<div class="t" style="left:856.00px;top:1036.78px;font-size:19.6px;font-weight:400;color:#1c1c1c;letter-spacing:-0.141px;-webkit-text-stroke:0.22px #1c1c1c;">Emily</div>
<div class="t" style="left:1127.70px;top:1036.68px;font-size:19.8px;font-weight:400;color:#1c1c1c;letter-spacing:0.259px;-webkit-text-stroke:0.22px #1c1c1c;">Android</div>
<div class="t" style="left:1399.60px;top:1036.68px;font-size:19.8px;font-weight:400;color:#1c1c1c;letter-spacing:0.407px;-webkit-text-stroke:0.22px #1c1c1c;">10.61.232.29</div>
<div class="t" style="left:1671.00px;top:1036.68px;font-size:19.8px;font-weight:400;color:#1c1c1c;letter-spacing:0.407px;-webkit-text-stroke:0.22px #1c1c1c;">10.61.232.29</div>
<div class="t" style="left:1941.40px;top:1036.68px;font-size:19.8px;font-weight:400;color:#1c1c1c;letter-spacing:0.286px;-webkit-text-stroke:0.22px #1c1c1c;">android</div>
<div class="t" style="left:2212.40px;top:1036.68px;font-size:19.8px;font-weight:400;color:#1c1c1c;letter-spacing:0.035px;-webkit-text-stroke:0.22px #1c1c1c;">Installed</div>
<div class="t" style="left:2484.60px;top:1036.68px;font-size:19.8px;font-weight:400;color:#1c1c1c;letter-spacing:-0.102px;-webkit-text-stroke:0.22px #1c1c1c;">Au</div>
<div class="b" style="left:406.20px;top:1149.00px;width:2156.80px;height:1.00px;background:#e3e4e6;"></div>
<div class="b" style="left:474.00px;top:1108.16px;width:14.00px;height:14.00px;background:#12b981;border-radius:50%;"></div>
<div class="t" style="left:503.20px;top:1105.96px;font-size:19.6px;font-weight:400;color:#1c1c1c;letter-spacing:-0.122px;-webkit-text-stroke:0.22px #1c1c1c;">David</div>
<div class="t" style="left:856.00px;top:1105.96px;font-size:19.6px;font-weight:400;color:#1c1c1c;letter-spacing:-0.122px;-webkit-text-stroke:0.22px #1c1c1c;">David</div>
<div class="t" style="left:1127.70px;top:1105.86px;font-size:19.8px;font-weight:400;color:#1c1c1c;letter-spacing:0.259px;-webkit-text-stroke:0.22px #1c1c1c;">Android</div>
<div class="t" style="left:1399.60px;top:1105.86px;font-size:19.8px;font-weight:400;color:#1c1c1c;letter-spacing:0.407px;-webkit-text-stroke:0.22px #1c1c1c;">10.61.232.29</div>
<div class="t" style="left:1671.00px;top:1105.86px;font-size:19.8px;font-weight:400;color:#1c1c1c;letter-spacing:0.407px;-webkit-text-stroke:0.22px #1c1c1c;">10.61.232.29</div>
<div class="t" style="left:1941.40px;top:1105.86px;font-size:19.8px;font-weight:400;color:#1c1c1c;letter-spacing:0.286px;-webkit-text-stroke:0.22px #1c1c1c;">android</div>
<div class="t" style="left:2212.40px;top:1105.86px;font-size:19.8px;font-weight:400;color:#1c1c1c;letter-spacing:0.035px;-webkit-text-stroke:0.22px #1c1c1c;">Installed</div>
<div class="t" style="left:2484.60px;top:1105.86px;font-size:19.8px;font-weight:400;color:#1c1c1c;letter-spacing:-0.102px;-webkit-text-stroke:0.22px #1c1c1c;">Au</div>
<div class="b" style="left:406.20px;top:1218.00px;width:2156.80px;height:1.00px;background:#e3e4e6;"></div>
<div class="b" style="left:474.00px;top:1177.34px;width:14.00px;height:14.00px;background:#12b981;border-radius:50%;"></div>
<div class="t" style="left:503.20px;top:1175.14px;font-size:19.6px;font-weight:400;color:#1c1c1c;letter-spacing:-0.244px;-webkit-text-stroke:0.22px #1c1c1c;">Daniel - Test Device</div>
<div class="t" style="left:856.00px;top:1175.14px;font-size:19.6px;font-weight:400;color:#1c1c1c;letter-spacing:-0.060px;-webkit-text-stroke:0.22px #1c1c1c;">Daniel</div>
<div class="t" style="left:1127.70px;top:1175.04px;font-size:19.8px;font-weight:400;color:#1c1c1c;letter-spacing:0.259px;-webkit-text-stroke:0.22px #1c1c1c;">Android</div>
<div class="t" style="left:1399.60px;top:1175.04px;font-size:19.8px;font-weight:400;color:#1c1c1c;letter-spacing:0.407px;-webkit-text-stroke:0.22px #1c1c1c;">10.61.232.29</div>
<div class="t" style="left:1671.00px;top:1175.04px;font-size:19.8px;font-weight:400;color:#1c1c1c;letter-spacing:0.407px;-webkit-text-stroke:0.22px #1c1c1c;">10.61.232.29</div>
<div class="t" style="left:1941.40px;top:1175.04px;font-size:19.8px;font-weight:400;color:#1c1c1c;letter-spacing:0.286px;-webkit-text-stroke:0.22px #1c1c1c;">android</div>
<div class="t" style="left:2212.40px;top:1175.04px;font-size:19.8px;font-weight:400;color:#1c1c1c;letter-spacing:0.035px;-webkit-text-stroke:0.22px #1c1c1c;">Installed</div>
<div class="t" style="left:2484.60px;top:1175.04px;font-size:19.8px;font-weight:400;color:#1c1c1c;letter-spacing:-0.102px;-webkit-text-stroke:0.22px #1c1c1c;">Au</div>
<div class="b" style="left:2510.60px;top:194.00px;width:52.40px;height:56.60px;background:#f3f4f6;border-radius:0 4px 0 0;"></div>
<div class="b" style="left:2510.60px;top:250.90px;width:52.40px;height:67.88px;background:#fff;"></div>
<div class="b" style="left:2510.60px;top:320.08px;width:52.40px;height:67.88px;background:#fff;"></div>
<div class="b" style="left:2510.60px;top:389.26px;width:52.40px;height:67.88px;background:#fff;"></div>
<div class="b" style="left:2510.60px;top:458.44px;width:52.40px;height:67.88px;background:#fff;"></div>
<div class="b" style="left:2510.60px;top:527.62px;width:52.40px;height:67.88px;background:#fff;"></div>
<div class="b" style="left:2510.60px;top:596.80px;width:52.40px;height:67.88px;background:#fff;"></div>
<div class="b" style="left:2510.60px;top:665.98px;width:52.40px;height:67.88px;background:#fff;"></div>
<div class="b" style="left:2510.60px;top:735.16px;width:52.40px;height:67.88px;background:#fff;"></div>
<div class="b" style="left:2510.60px;top:804.34px;width:52.40px;height:67.88px;background:#fff;"></div>
<div class="b" style="left:2510.60px;top:873.52px;width:52.40px;height:67.88px;background:#fff;"></div>
<div class="b" style="left:2510.60px;top:942.70px;width:52.40px;height:67.88px;background:#fff;"></div>
<div class="b" style="left:2510.60px;top:1011.88px;width:52.40px;height:67.88px;background:#fff;"></div>
<div class="b" style="left:2510.60px;top:1081.06px;width:52.40px;height:67.88px;background:#fff;"></div>
<div class="b" style="left:2510.60px;top:1150.24px;width:52.40px;height:67.88px;background:#fff;"></div>
<svg style="left:435.2px;top:274.1px" width="21" height="21" viewBox="0 0 21 21"><rect x="1.9" y="1.9" width="17" height="17" rx="5" fill="none" stroke="#4f80ee" stroke-width="1.8"/></svg>
<svg style="left:580px;top:271px" width="26" height="26" viewBox="0 0 26 26" fill="none" stroke="#4a7cf0" stroke-width="1.45" stroke-linejoin="round" stroke-linecap="round">
<rect x="-2.7" y="-9.9" width="5.4" height="19.8" rx="2.4" transform="translate(12.7 12.6) rotate(45)"/>
<path d="M15.2 6.2 L19 10"/></svg>
<div class="b" style="left:2521.45px;top:283.65px;width:2.90px;height:2.90px;background:#2c2c2c;border-radius:50%;"></div>
<div class="b" style="left:2527.55px;top:283.65px;width:2.90px;height:2.90px;background:#2c2c2c;border-radius:50%;"></div>
<div class="b" style="left:2533.65px;top:283.65px;width:2.90px;height:2.90px;background:#2c2c2c;border-radius:50%;"></div>
<div class="b" style="left:2539.75px;top:283.65px;width:2.90px;height:2.90px;background:#2c2c2c;border-radius:50%;"></div>
<div class="b" style="left:406.20px;top:1266.00px;width:2156.80px;height:10.00px;background:#eeeeef;"></div>
<div class="b" style="left:406.20px;top:1266.00px;width:667.00px;height:14.00px;background:#8b8b8b;border-radius:4px;"></div>
<div class="b" style="left:2563.00px;top:198.00px;width:3.00px;height:1082.00px;background:linear-gradient(90deg,rgba(150,155,170,0.14),rgba(150,155,170,0));"></div>
<div class="b" style="left:2200.30px;top:167.60px;width:275.90px;height:566.40px;background:#fff;border-radius:6px;box-shadow:0 1px 5px rgba(60,70,100,0.13);"></div>
<svg style="left:2328px;top:154px" width="32" height="18" viewBox="0 0 32 18"><path d="M5.0 14.2 L15.8 3.6 L26.6 14.2 Z" fill="#ffffff"/></svg>
<div class="b" style="left:2469.30px;top:174.00px;width:7.00px;height:489.40px;background:#f1f1f1;"></div>
<div class="b" style="left:2469.30px;top:174.60px;width:7.00px;height:195.00px;background:#c6c7c9;"></div>
<svg style="left:2212.8px;top:188.50px" width="18.4" height="18.4" viewBox="0 0 18.4 18.4" fill="none" stroke="#a9c0f3" stroke-width="1.6" stroke-linecap="round" stroke-linejoin="round"><rect x="0.9" y="0.9" width="16.6" height="16.6" rx="4.6"/><path d="M5.2 9.7 L7.9 12.2 L13 6.4" stroke-width="1.5"/></svg>
<div class="t" style="left:2254.20px;top:186.10px;font-size:18.4px;font-weight:400;color:#1a1a1a;letter-spacing:-0.084px;-webkit-text-stroke:0.5px #1a1a1a;">Device name</div>
<svg style="left:2212.8px;top:236.27px" width="18.4" height="18.4" viewBox="0 0 18.4 18.4" fill="none" stroke="#a9c0f3" stroke-width="1.6" stroke-linecap="round" stroke-linejoin="round"><rect x="0.9" y="0.9" width="16.6" height="16.6" rx="4.6"/><path d="M5.2 9.7 L7.9 12.2 L13 6.4" stroke-width="1.5"/></svg>
<div class="t" style="left:2254.20px;top:233.87px;font-size:18.4px;font-weight:400;color:#1a1a1a;letter-spacing:0.214px;-webkit-text-stroke:0.5px #1a1a1a;">Platform</div>
<svg style="left:2212.8px;top:284.04px" width="18.4" height="18.4" viewBox="0 0 18.4 18.4" fill="none" stroke="#4478ea" stroke-width="1.6" stroke-linecap="round" stroke-linejoin="round"><rect x="0.9" y="0.9" width="16.6" height="16.6" rx="4.6"/><path d="M5.2 9.7 L7.9 12.2 L13 6.4" stroke-width="1.5"/></svg>
<div class="t" style="left:2254.20px;top:281.64px;font-size:18.4px;font-weight:400;color:#1a1a1a;letter-spacing:-0.252px;-webkit-text-stroke:0.5px #1a1a1a;">Private IP address</div>
<svg style="left:2212.8px;top:331.81px" width="18.4" height="18.4" viewBox="0 0 18.4 18.4" fill="none" stroke="#4478ea" stroke-width="1.6" stroke-linecap="round" stroke-linejoin="round"><rect x="0.9" y="0.9" width="16.6" height="16.6" rx="4.6"/><path d="M5.2 9.7 L7.9 12.2 L13 6.4" stroke-width="1.5"/></svg>
<div class="t" style="left:2254.20px;top:329.41px;font-size:18.4px;font-weight:400;color:#1a1a1a;letter-spacing:-0.234px;-webkit-text-stroke:0.5px #1a1a1a;">Public IP address</div>
<svg style="left:2212.8px;top:379.58px" width="18.4" height="18.4" viewBox="0 0 18.4 18.4" fill="none" stroke="#4478ea" stroke-width="1.6" stroke-linecap="round" stroke-linejoin="round"><rect x="0.9" y="0.9" width="16.6" height="16.6" rx="4.6"/><path d="M5.2 9.7 L7.9 12.2 L13 6.4" stroke-width="1.5"/></svg>
<div class="t" style="left:2254.20px;top:377.18px;font-size:18.4px;font-weight:400;color:#1a1a1a;letter-spacing:-0.470px;-webkit-text-stroke:0.5px #1a1a1a;">OS name</div>
<svg style="left:2212.8px;top:427.35px" width="18.4" height="18.4" viewBox="0 0 18.4 18.4" fill="none" stroke="#4478ea" stroke-width="1.6" stroke-linecap="round" stroke-linejoin="round"><rect x="0.9" y="0.9" width="16.6" height="16.6" rx="4.6"/><path d="M5.2 9.7 L7.9 12.2 L13 6.4" stroke-width="1.5"/></svg>
<div class="t" style="left:2254.20px;top:424.95px;font-size:18.4px;font-weight:400;color:#1a1a1a;letter-spacing:0.205px;-webkit-text-stroke:0.5px #1a1a1a;">Deployment status</div>
<svg style="left:2212.8px;top:475.12px" width="18.4" height="18.4" viewBox="0 0 18.4 18.4" fill="none" stroke="#4478ea" stroke-width="1.6" stroke-linecap="round" stroke-linejoin="round"><rect x="0.9" y="0.9" width="16.6" height="16.6" rx="4.6"/><path d="M5.2 9.7 L7.9 12.2 L13 6.4" stroke-width="1.5"/></svg>
<div class="t" style="left:2254.20px;top:472.72px;font-size:18.4px;font-weight:400;color:#1a1a1a;letter-spacing:0.171px;-webkit-text-stroke:0.5px #1a1a1a;">Agent installed on</div>
<svg style="left:2212.8px;top:522.89px" width="18.4" height="18.4" viewBox="0 0 18.4 18.4" fill="none" stroke="#4478ea" stroke-width="1.6" stroke-linecap="round" stroke-linejoin="round"><rect x="0.9" y="0.9" width="16.6" height="16.6" rx="4.6"/><path d="M5.2 9.7 L7.9 12.2 L13 6.4" stroke-width="1.5"/></svg>
<div class="t" style="left:2254.20px;top:520.49px;font-size:18.4px;font-weight:400;color:#1a1a1a;letter-spacing:0.126px;-webkit-text-stroke:0.5px #1a1a1a;">Agent last updated on</div>
<svg style="left:2212.8px;top:570.66px" width="18.4" height="18.4" viewBox="0 0 18.4 18.4" fill="none" stroke="#4478ea" stroke-width="1.6" stroke-linecap="round" stroke-linejoin="round"><rect x="0.9" y="0.9" width="16.6" height="16.6" rx="4.6"/><path d="M5.2 9.7 L7.9 12.2 L13 6.4" stroke-width="1.5"/></svg>
<div class="t" style="left:2254.20px;top:568.26px;font-size:18.4px;font-weight:400;color:#1a1a1a;letter-spacing:0.135px;-webkit-text-stroke:0.5px #1a1a1a;">Added by</div>
<svg style="left:2212.8px;top:618.43px" width="18.4" height="18.4" viewBox="0 0 18.4 18.4" fill="none" stroke="#4478ea" stroke-width="1.6" stroke-linecap="round" stroke-linejoin="round"><rect x="0.9" y="0.9" width="16.6" height="16.6" rx="4.6"/><path d="M5.2 9.7 L7.9 12.2 L13 6.4" stroke-width="1.5"/></svg>
<div class="t" style="left:2254.20px;top:616.03px;font-size:18.4px;font-weight:400;color:#1a1a1a;letter-spacing:0.104px;-webkit-text-stroke:0.5px #1a1a1a;">Domain</div>
<svg style="left:2216px;top:676px" width="118" height="46" viewBox="0 0 118 46"><rect x="1.7" y="1.7" width="113.6" height="41.4" rx="5.5" fill="#fff" stroke="#555" stroke-width="1.4"/></svg>
<div class="t" style="left:2244.00px;top:689.40px;font-size:19.6px;font-weight:400;color:#666;letter-spacing:0.000px;">Cancel</div>
<div class="b" style="left:2344.00px;top:677.00px;width:116.00px;height:42.80px;background:#276ce6;border-radius:6px;"></div>
<div class="t" style="left:2381.00px;top:689.90px;font-size:18.6px;font-weight:400;color:#fff;letter-spacing:-0.098px;-webkit-text-stroke:0.5px #fff;">Save</div>
<div class="b" style="left:2164.00px;top:129.90px;width:367.30px;height:635.60px;border:7.3px solid #ff0050;"></div>
<div class="b" style="left:2604.50px;top:0.00px;width:1.50px;height:1276.00px;background:#2b2b2b;"></div>
<div class="b" style="left:0.00px;top:0.00px;width:2606.00px;height:4.40px;background:#2b2b2b;"></div>
</div></body></html>
